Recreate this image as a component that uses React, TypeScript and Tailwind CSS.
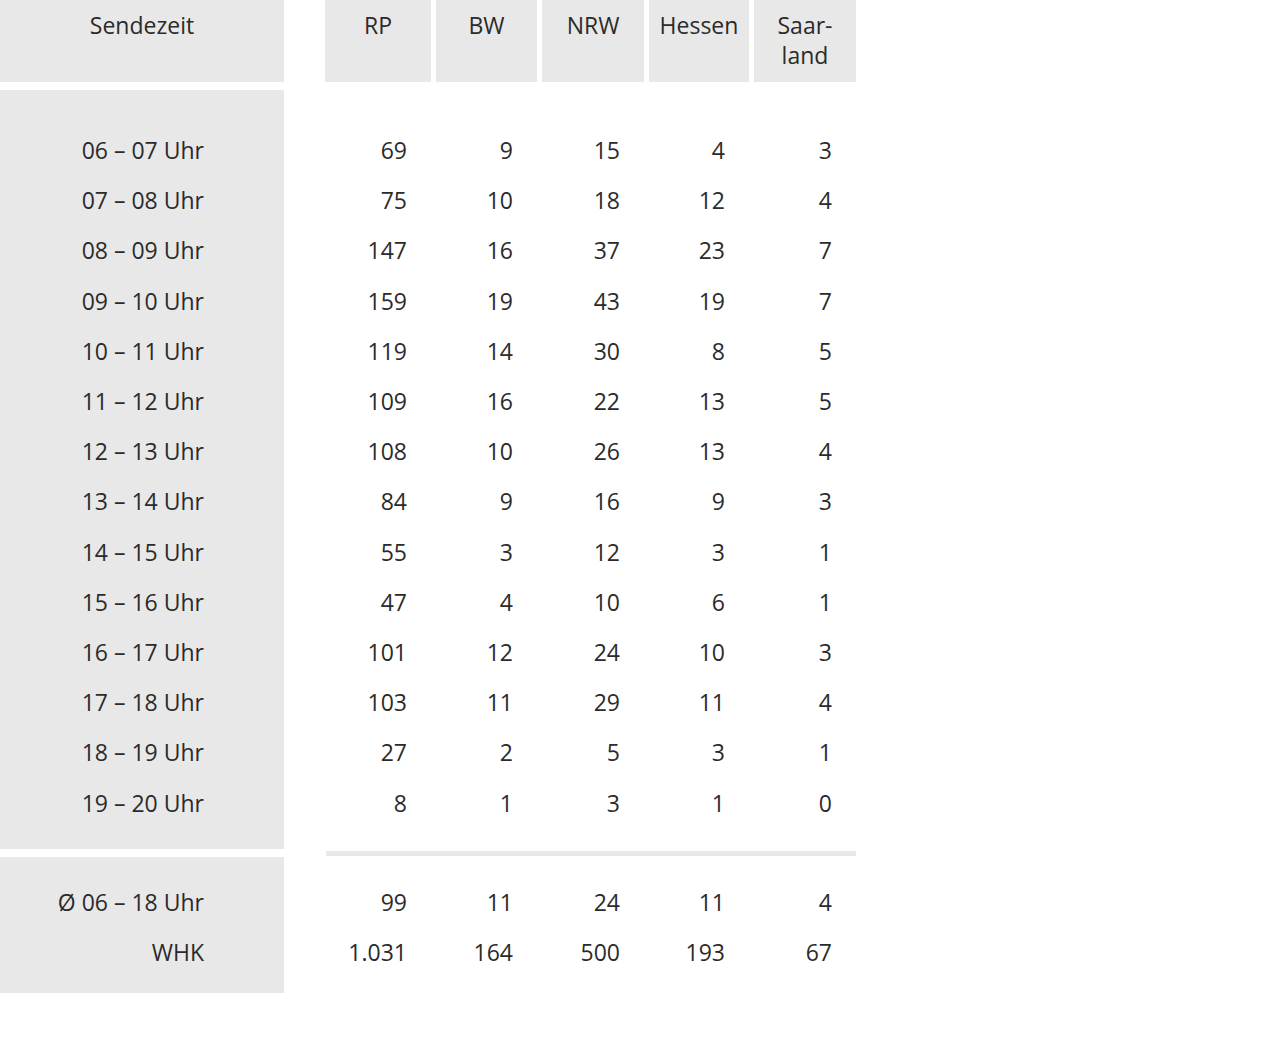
const cols = [
    { name: "RP", w: "w-[106px]" },
    { name: "BW", w: "w-[101px]" },
    { name: "NRW", w: "w-[102px]" },
    { name: "Hessen", w: "w-[100px]" },
    { name: "Saar-\nland", w: "w-[102px]" },
];

// number cells include the 5px gap on their left, except the first
const numW = ["w-[106px]", "w-[106px]", "w-[107px]", "w-[105px]", "w-[107px]"];

const rows: [string, string[]][] = [
    ["06 – 07 Uhr", ["69", "9", "15", "4", "3"]],
    ["07 – 08 Uhr", ["75", "10", "18", "12", "4"]],
    ["08 – 09 Uhr", ["147", "16", "37", "23", "7"]],
    ["09 – 10 Uhr", ["159", "19", "43", "19", "7"]],
    ["10 – 11 Uhr", ["119", "14", "30", "8", "5"]],
    ["11 – 12 Uhr", ["109", "16", "22", "13", "5"]],
    ["12 – 13 Uhr", ["108", "10", "26", "13", "4"]],
    ["13 – 14 Uhr", ["84", "9", "16", "9", "3"]],
    ["14 – 15 Uhr", ["55", "3", "12", "3", "1"]],
    ["15 – 16 Uhr", ["47", "4", "10", "6", "1"]],
    ["16 – 17 Uhr", ["101", "12", "24", "10", "3"]],
    ["17 – 18 Uhr", ["103", "11", "29", "11", "4"]],
    ["18 – 19 Uhr", ["27", "2", "5", "3", "1"]],
    ["19 – 20 Uhr", ["8", "1", "3", "1", "0"]],
];

const footer: [string, string[]][] = [
    ["Ø 06 – 18 Uhr", ["99", "11", "24", "11", "4"]],
    ["WHK", ["1.031", "164", "500", "193", "67"]],
];

function Row({ label, values, h }: { label: string; values: string[]; h: string }) {
    return (
        <div className={`flex ${h}`}>
            <div className="w-[284px] bg-[#e8e8e8] flex items-center justify-end pr-[80px]">{label}</div>
            <div className="ml-[41px] flex">
                {values.map((v, i) => (
                    <div key={i} className={`${numW[i]} flex items-center justify-end pr-[24px]`}>{v}</div>
                ))}
            </div>
        </div>
    );
}

function Spacer({ h }: { h: string }) {
    return (
        <div className={`flex ${h}`}>
            <div className="w-[284px] bg-[#e8e8e8]"></div>
        </div>
    );
}

export default function App() {
    return (
        <div className="w-[1280px] h-[1043px] bg-white text-[#2b2b2b] text-[23px] leading-[30px]" style={{ fontFamily: '"Open Sans", "Noto Sans", sans-serif' }}>
            {/* header */}
            <div className="flex h-[82px]">
                <div className="w-[284px] bg-[#e8e8e8] text-center pt-[10px]">Sendezeit</div>
                <div className="ml-[41px] flex gap-[5px]">
                    {cols.map((c) => (
                        <div key={c.name} className={`${c.w} bg-[#e8e8e8] text-center pt-[10px] whitespace-pre-line`}>{c.name}</div>
                    ))}
                </div>
            </div>

            {/* body */}
            <div className="mt-[8px] flex flex-col">
                <Spacer h="h-[35px]" />
                {rows.map(([label, values]) => (
                    <Row key={label} label={label} values={values} h="h-[50.2px]" />
                ))}
                <Spacer h="h-[21px]" />
            </div>

            <div className="flex h-[8px]">
                <div className="w-[284px]"></div>
                <div className="ml-[42px] w-[530px] mt-[2px] h-[5px] bg-[#e8e8e8]"></div>
            </div>

            {/* footer */}
            <div className="flex flex-col">
                <Spacer h="h-[20px]" />
                {footer.map(([label, values]) => (
                    <Row key={label} label={label} values={values} h="h-[50px]" />
                ))}
                <Spacer h="h-[16px]" />
            </div>
        </div>
    );
}
